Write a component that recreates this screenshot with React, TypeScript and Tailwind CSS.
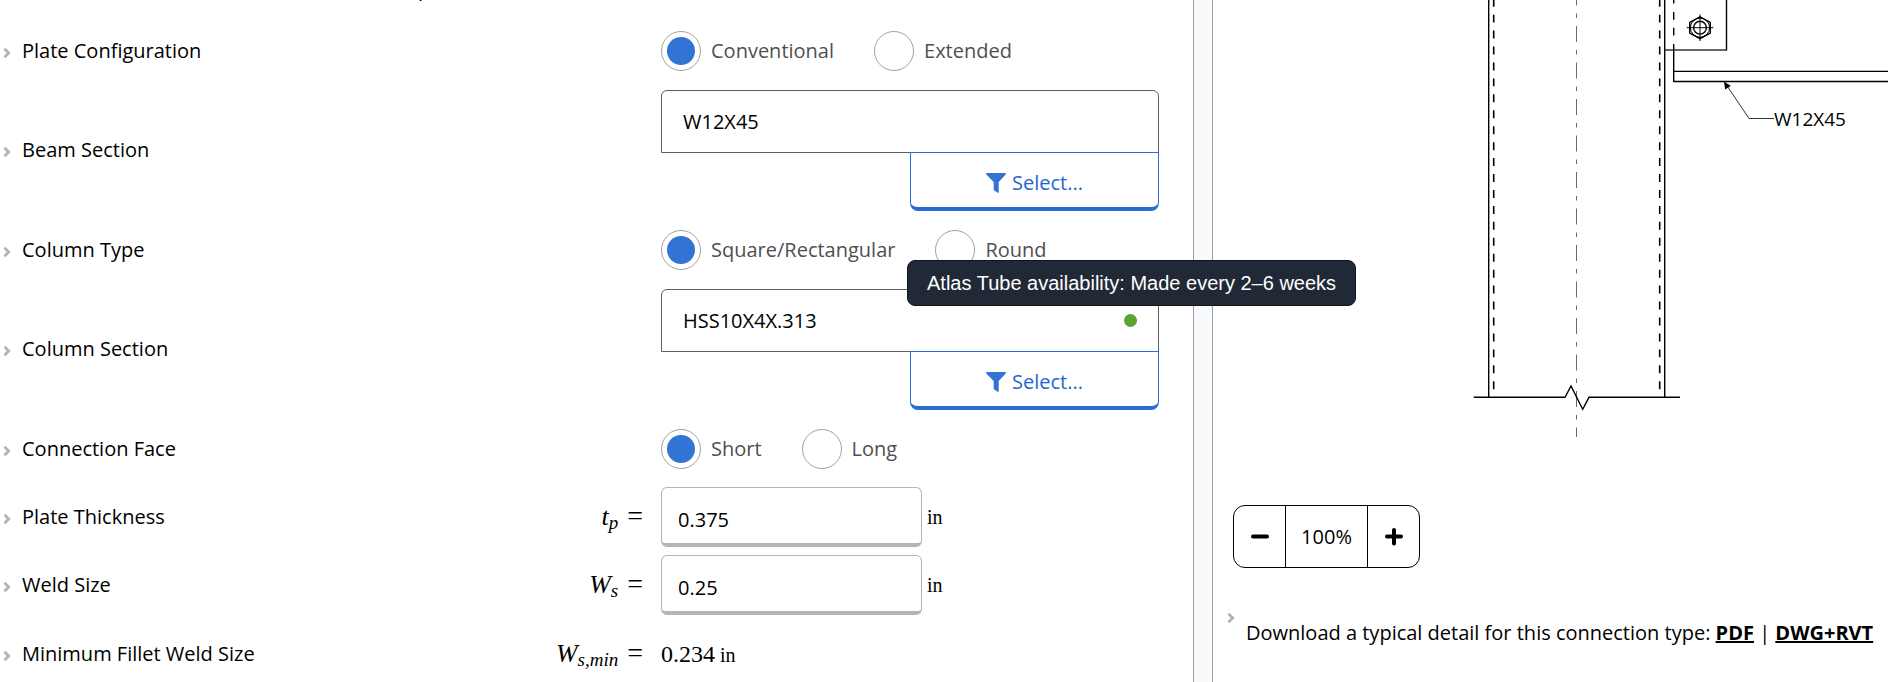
import React from "react";

const MATH = "font-['Liberation_Serif',serif] text-black";

function Chevron({ className = "" }: { className?: string }) {
  return (
    <svg viewBox="0 0 8 12" className={`h-3 w-2 shrink-0 ${className}`} fill="none" stroke="#b4b4b4" strokeWidth="2.8" aria-hidden="true">
      <path d="M1.5 1.8 L5.7 6 L1.5 10.2" />
    </svg>
  );
}

function FunnelIcon() {
  return (
    <svg viewBox="0 0 20 20" className="h-5 w-5 shrink-0" fill="#3273d3" aria-hidden="true">
      <path d="M.6 0 H19.4 Q20.2 .5 19.7 1.4 L12.7 9 V19.3 Q12.4 20.1 11.6 19.8 L8 17.2 Q7.7 17 7.7 16.5 V9 L.3 1.4 Q-.2 .5 .6 0 Z" />
    </svg>
  );
}

type RowProps = {
  label: string;
  htmlFor?: string;
  symbol?: React.ReactNode;
  height: string;
  children: React.ReactNode;
};

function Row({ label, htmlFor, symbol, height, children }: RowProps) {
  return (
    <div className={`flex items-center pr-[34px] ${height}`}>
      <div className="flex min-w-0 flex-1 items-center">
        <Chevron className="mt-1 ml-[3px]" />
        {htmlFor ? (
          <label htmlFor={htmlFor} className="ml-[11px]">{label}</label>
        ) : (
          <span className="ml-[11px]">{label}</span>
        )}
      </div>
      {symbol && <div className={`mr-[18px] ${MATH}`}>{symbol}</div>}
      <div className="w-[498px] shrink-0">{children}</div>
    </div>
  );
}

function Symbol({ base, sub }: { base: string; sub: string }) {
  return (
    <span className="flex items-baseline">
      <i className="text-[26px]">{base}</i>
      <i className="relative top-1 text-[19px]">{sub}</i>
      <span className="ml-[9px] text-[28px]">=</span>
    </span>
  );
}

function RadioGroup({ name, options }: { name: string; options: string[] }) {
  return (
    <div role="radiogroup" aria-label={name} className="flex items-center gap-10">
      {options.map((option, i) => (
        <label key={option} className="flex items-center gap-[10px] text-[#4f4f4f]">
          <input
            type="radio"
            name={name}
            defaultChecked={i === 0}
            className="size-10 appearance-none rounded-full border border-[#a3a3a3] bg-clip-content p-[5px] checked:bg-[#3273d3]"
          />
          {option}
        </label>
      ))}
    </div>
  );
}

function SectionPicker({ id, value, availability }: { id: string; value: string; availability?: string }) {
  return (
    <div className="relative flex flex-col items-end">
      <input
        id={id}
        defaultValue={value}
        className="h-[63px] w-full rounded-t-md border border-[#5f5f5f] bg-white px-[21px]"
      />
      <button
        type="button"
        className="z-10 -mt-px flex h-[59px] w-1/2 items-center justify-center gap-1.5 rounded-b-lg border border-b-4 border-[#2a6dd2] bg-white pt-1.5 text-[#1f66d0]"
      >
        <FunnelIcon />
        Select...
      </button>
      {availability && (
        <>
          <span className="absolute top-[25px] right-[22px] size-[13px] rounded-full bg-[#5aa532]" />
          <div
            role="tooltip"
            className="absolute -top-[29px] left-[246px] z-20 flex h-[46px] items-center rounded-lg border border-[#10151d] bg-[#222936] px-[19px] font-['Liberation_Sans',sans-serif] whitespace-nowrap text-white"
          >
            {availability}
          </div>
        </>
      )}
    </div>
  );
}

function NumberField({ id, value }: { id: string; value: string }) {
  return (
    <div className="flex items-center gap-[5px]">
      <input
        id={id}
        inputMode="decimal"
        defaultValue={value}
        className="h-[60px] w-[261px] rounded-md border border-b-4 border-[#b5b5b5] bg-white px-4 pt-2"
      />
      <span className={MATH}>in</span>
    </div>
  );
}

function ConnectionDrawing() {
  return (
    <svg viewBox="1213 0 675 505" className="block w-full" fill="none" stroke="#000" strokeWidth="1.4" role="img" aria-label="Connection elevation">
      <path d="M1488.7 0 V397.3 M1664.7 0 V397.3" />
      <path d="M1493.7 -1.3 V390 M1659.7 -1.3 V390" strokeDasharray="7.97" strokeWidth="1.6" />
      <path d="M1576.5 -10.5 V437" strokeDasharray="16 8 4.5 8" strokeWidth="0.8" stroke="#444" />
      <path d="M1473.7 397.3 H1565 L1571 386 L1582.7 409.3 L1589 397.3 H1680" />
      <path d="M1726.5 0 V50.5" />
      <path d="M1664.7 50 H1727" stroke="#333" />
      <path d="M1673.7 0 V3.5 M1673.7 12 V19.7 M1673.7 27.7 V35.4 M1673.7 44 V82" />
      <path d="M1673.7 71.4 H1888 M1673.7 81.5 H1888" />
      <path d="M1700 16.9 L1710.3 22.3 V33.1 L1700 38.7 L1689.7 33.1 V22.3 Z" />
      <circle cx="1700" cy="27.7" r="9.6" strokeWidth="1" />
      <circle cx="1700" cy="27.7" r="6.4" />
      <path d="M1686.7 27.7 H1713.3 M1700 14.4 V41" strokeWidth="1" />
      <path d="M1724.5 82 L1749 118.5 H1774" strokeWidth="1" stroke="#333" />
      <path d="M1724 81.7 L1730.8 85.8 L1725.2 89.6 Z" fill="#000" stroke="none" />
      <text x="1774" y="126" fontSize="19" fill="#000" stroke="none">W12X45</text>
    </svg>
  );
}

export default function App() {
  return (
    <div className="grid min-h-screen grid-cols-[1193fr_20px_675fr] bg-white font-['Open_Sans',sans-serif] text-xl leading-7 text-black">
      <form className="min-w-0">
        <div className="h-4">
          <div className="flex h-[3px] items-end overflow-hidden pl-[322px]" aria-hidden="true">
            <span className="w-[79px]">,</span>
            <span className="w-[17px]">,</span>
            <span>p</span>
          </div>
        </div>
        <Row label="Plate Configuration" height="h-[69px]">
          <RadioGroup name="Plate Configuration" options={["Conventional", "Extended"]} />
        </Row>
        <Row label="Beam Section" htmlFor="beam" height="h-[130px]">
          <SectionPicker id="beam" value="W12X45" />
        </Row>
        <Row label="Column Type" height="h-[69px]">
          <RadioGroup name="Column Type" options={["Square/Rectangular", "Round"]} />
        </Row>
        <Row label="Column Section" htmlFor="column" height="h-[130px]">
          <SectionPicker id="column" value="HSS10X4X.313" availability="Atlas Tube availability: Made every 2–6 weeks" />
        </Row>
        <Row label="Connection Face" height="h-[69px]">
          <RadioGroup name="Connection Face" options={["Short", "Long"]} />
        </Row>
        <Row label="Plate Thickness" htmlFor="plate" symbol={<Symbol base="t" sub="p" />} height="h-[68px]">
          <NumberField id="plate" value="0.375" />
        </Row>
        <Row label="Weld Size" htmlFor="weld" symbol={<Symbol base="W" sub="s" />} height="h-[68px]">
          <NumberField id="weld" value="0.25" />
        </Row>
        <Row label="Minimum Fillet Weld Size" symbol={<Symbol base="W" sub="s,min" />} height="h-[62px] pt-2">
          <p className={`flex items-baseline gap-[5px] ${MATH}`}>
            <span className="text-2xl">0.234</span>
            <span>in</span>
          </p>
        </Row>
      </form>

      <div className="border-x border-[#a0a0a0] bg-[#f9fafc]" />

      <section className="min-w-0">
        <ConnectionDrawing />
        <div className="ml-5 flex h-[63px] w-[187px] items-stretch rounded-xl border border-black">
          <button type="button" aria-label="Zoom out" className="flex flex-1 items-center justify-center">
            <svg viewBox="0 0 18 18" className="size-[18px]" stroke="#000" strokeWidth="4" strokeLinecap="round">
              <path d="M2 8.5 H16" />
            </svg>
          </button>
          <output className="flex w-[83px] items-center justify-center border-x border-black">100%</output>
          <button type="button" aria-label="Zoom in" className="flex flex-1 items-center justify-center">
            <svg viewBox="0 0 18 18" className="size-[18px]" stroke="#000" strokeWidth="4" strokeLinecap="round">
              <path d="M2 8.5 H16 M9 2 V15.5" />
            </svg>
          </button>
        </div>
        <div className="mt-11 flex items-start pl-[14px]">
          <Chevron />
          <p className="mt-[7px] ml-[11px] whitespace-nowrap">
            Download a typical detail for this connection type:{" "}
            <a href="#pdf" className="font-bold underline">PDF</a> |{" "}
            <a href="#dwg" className="font-bold underline">DWG+RVT</a>
          </p>
        </div>
      </section>
    </div>
  );
}
